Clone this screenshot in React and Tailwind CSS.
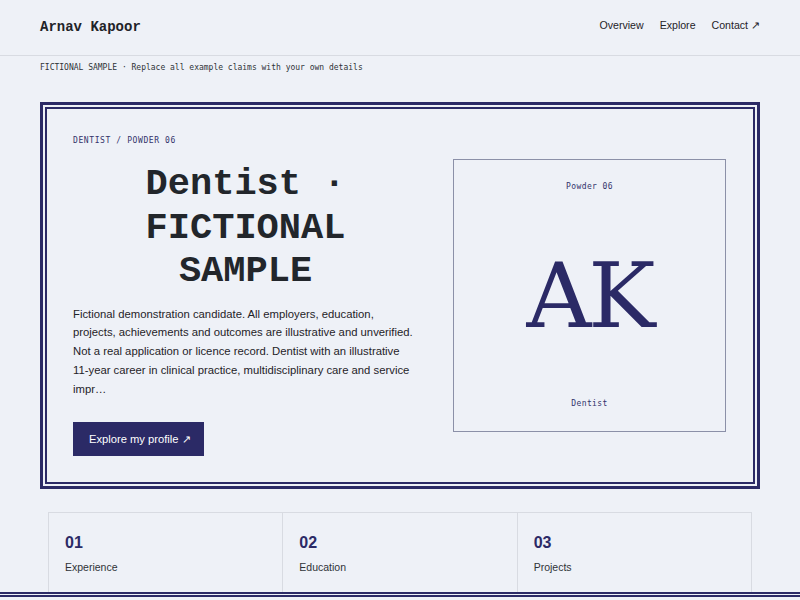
export default function App() {
  const mono = { fontFamily: '"Liberation Mono", "DejaVu Sans Mono", monospace' };
  const smono = { fontFamily: '"DejaVu Sans Mono", "Liberation Mono", monospace' };
  const sans = { fontFamily: '"Liberation Sans", Arial, sans-serif' };
  const serif = { fontFamily: '"DejaVu Serif", "Liberation Serif", serif' };
  return (
    <div className="min-h-[600px] w-full bg-[#eef1f7] overflow-hidden" style={sans}>
      <header className="h-[56px] border-b border-[#d8dbe2] px-[40px] flex items-center justify-between">
        <div className="text-[14px] font-bold text-[#1f2328]" style={mono}>Arnav Kapoor</div>
        <nav className="flex items-center gap-[16px] text-[10.6px] text-[#1f2328] -mt-[4px]">
          <span>Overview</span>
          <span>Explore</span>
          <span>Contact ↗</span>
        </nav>
      </header>
      <div className="px-[40px] pt-[6px] text-[8px] leading-[12px] text-[#2f3338]" style={smono}>
        FICTIONAL SAMPLE · Replace all example claims with your own details
      </div>
      <section className="mx-[40px] mt-[28px] border-[3px] border-[#2b2a66] p-[2px]">
        <div className="border-2 border-[#2b2a66] p-[26px] grid grid-cols-[345px_273px] gap-[35px] items-center">
          <div className="flex flex-col">
            <div className="text-[8px] leading-[12px] tracking-[0.6px] text-[#33336b]" style={smono}>
              DENTIST / POWDER 06
            </div>
            <h1 className="mt-[16px] text-[37px] leading-[43.5px] font-bold text-center text-[#22262b]" style={mono}>
              Dentist · FICTIONAL SAMPLE
            </h1>
            <p className="mt-[11px] text-[11.3px] leading-[18.75px] text-[#1f2328]">
              Fictional demonstration candidate. All employers, education, projects, achievements and outcomes are illustrative and unverified. Not a real application or licence record. Dentist with an illustrative 11-year career in clinical practice, multidisciplinary care and service impr…
            </p>
            <div className="mt-[24px]">
              <span className="inline-flex items-center h-[34px] pl-[16px] pr-[13px] bg-[#2b2a66] text-white text-[11.2px]">
                Explore my profile ↗
              </span>
            </div>
          </div>
          <div className="w-[273px] h-[273px] border border-[#8b90a8] flex flex-col items-center justify-between py-[21px]">
            <div className="text-[8px] leading-[12px] tracking-[0.4px] text-[#33336b]" style={smono}>Powder 06</div>
            <div className="text-[90px] leading-none text-[#2b2a66] tracking-[-3px]" style={serif}>AK</div>
            <div className="text-[8px] leading-[12px] tracking-[0.4px] text-[#33336b]" style={smono}>Dentist</div>
          </div>
        </div>
      </section>
      <div className="mx-[48px] mt-[23px] grid grid-cols-3 border-t border-l border-[#d8dbe2]">
        {[['01', 'Experience'], ['02', 'Education'], ['03', 'Projects']].map(([n, t]) => (
          <div key={n} className="border-r border-[#d8dbe2] px-[16px] pt-[20px] pb-[17px]">
            <div className="text-[16px] leading-[20px] font-bold text-[#2b2a66]">{n}</div>
            <div className="mt-[6px] text-[10.5px] leading-[16px] text-[#2f3338]">{t}</div>
          </div>
        ))}
      </div>
      <div className="border-t-[5px] border-double border-[#2b2a66] h-[40px]"></div>
    </div>
  );
}
